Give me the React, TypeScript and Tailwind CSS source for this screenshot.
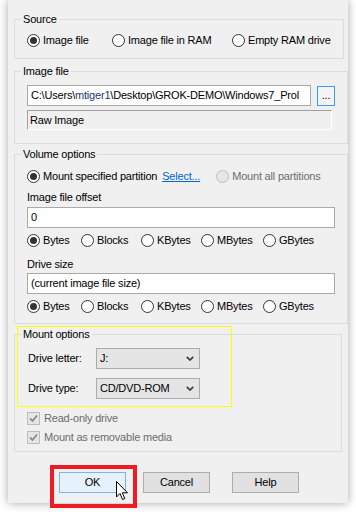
import React from "react";

function Radio({ checked = false, disabled = false, label }: { checked?: boolean; disabled?: boolean; label: string }) {
  return (
    <div className="flex items-center h-[14px]">
      <div
        className={
          "w-[13px] h-[13px] rounded-full border flex items-center justify-center shrink-0 " +
          (disabled ? "border-[#bcbcbc] bg-[#e6e6e6]" : "border-[#333333] bg-white")
        }
      >
        {checked && <div className="w-[7px] h-[7px] rounded-full bg-[#333333]" />}
      </div>
      <span className={"ml-[3px] whitespace-nowrap " + (disabled ? "text-[#6d6d6d]" : "text-black")}>{label}</span>
    </div>
  );
}

function Check({ label }: { label: string }) {
  return (
    <div className="flex items-center h-[14px]">
      <div className="w-[13px] h-[13px] border border-[#bcbcbc] bg-[#e6e6e6] flex items-center justify-center shrink-0">
        <svg width="9" height="9" viewBox="0 0 9 9">
          <path d="M1 4.5 L3.5 7 L8 1.5" fill="none" stroke="#8a8a8a" strokeWidth="1.8" />
        </svg>
      </div>
      <span className="ml-[4px] whitespace-nowrap text-[#6d6d6d]">{label}</span>
    </div>
  );
}

function Combo({ value }: { value: string }) {
  return (
    <div className="w-[104px] h-[21px] border border-[#acacac] bg-[#e5e5e5] flex items-center pl-[3px] pr-[5px]">
      <span className="flex-1">{value}</span>
      <svg width="8" height="5" viewBox="0 0 8 5">
        <path d="M0.8 0.8 L4 4 L7.2 0.8" fill="none" stroke="#3c3c3c" strokeWidth="1.7" />
      </svg>
    </div>
  );
}

function Btn({ label, primary = false }: { label: string; primary?: boolean }) {
  return (
    <div
      className={
        "w-[67px] h-[21px] border flex items-center justify-center " +
        (primary ? "bg-[#e5f1fb] border-[#7eb4ea]" : "bg-[#e1e1e1] border-[#adadad]")
      }
    >
      {label}
    </div>
  );
}

const fs = "border border-[#dcdcdc] px-[12px] m-0";
const lg = "-ml-[6px] px-[2px] leading-[14px] h-[14px]";

export default function App() {
  return (
    <div className="w-[356px] h-[512px] bg-white overflow-hidden relative font-['Liberation_Sans',Arial,sans-serif] text-[11px] tracking-[-0.2px] text-black">
      <div className="ml-[8px] w-[340px] h-[503px] bg-[#f0f0f0] shadow-[0_0_9px_rgba(0,0,0,0.35)] px-[6px] pt-[12px] flex flex-col">
        {/* Source */}
        <fieldset className={fs + " h-[47px]"}>
          <legend className={lg}>Source</legend>
          <div className="flex mt-[7px]">
            <div className="w-[85px]">
              <Radio checked label="Image file" />
            </div>
            <div className="w-[120px]">
              <Radio label="Image file in RAM" />
            </div>
            <Radio label="Empty RAM drive" />
          </div>
        </fieldset>

        {/* Image file */}
        <fieldset className={fs + " h-[80px] mt-[5px]"}>
          <legend className={lg}>Image file</legend>
          <div className="flex items-start mt-[7px]">
            <div className="w-[284px] h-[21px] border border-[#a9a9a9] bg-white flex items-center pl-[3px] overflow-hidden whitespace-nowrap">
              C:\Users\<span className="text-[#23346e] bg-white">mtiger1</span>\Desktop\GROK-DEMO\Windows7_Prol
            </div>
            <div className="ml-[6px] mt-[1px] w-[18px] h-[20px] border border-[#3c9cf0] bg-[#f4f4f4] flex items-end justify-center pb-[4px] leading-none">
              ...
            </div>
          </div>
          <div className="mt-[4px] w-[305px] h-[20px] border-t border-l border-[#a0a0a0] border-b border-r border-b-white border-r-white flex items-center pl-[2px]">
            Raw Image
          </div>
        </fieldset>

        {/* Volume options */}
        <fieldset className={fs + " h-[177px] mt-[3px]"}>
          <legend className={lg}>Volume options</legend>
          <div className="flex items-center mt-[8px] h-[14px]">
            <Radio checked label="Mount specified partition" />
            <span className="ml-[5px] text-[#0066cc] underline">Select...</span>
            <div className="ml-[16px]">
              <Radio disabled label="Mount all partitions" />
            </div>
          </div>
          <div className="mt-[7px] h-[14px] leading-[14px]">Image file offset</div>
          <div className="mt-[3px] w-[308px] h-[21px] border border-[#a9a9a9] bg-white flex items-center pl-[3px]">0</div>
          <div className="flex mt-[5px]">
            <div className="w-[54px]"><Radio checked label="Bytes" /></div>
            <div className="w-[60px]"><Radio label="Blocks" /></div>
            <div className="w-[60px]"><Radio label="KBytes" /></div>
            <div className="w-[62px]"><Radio label="MBytes" /></div>
            <Radio label="GBytes" />
          </div>
          <div className="mt-[10px] h-[14px] leading-[14px]">Drive size</div>
          <div className="mt-[2px] w-[308px] h-[21px] border border-[#a9a9a9] bg-white flex items-center pl-[3px]">
            (current image file size)
          </div>
          <div className="flex mt-[5px]">
            <div className="w-[54px]"><Radio checked label="Bytes" /></div>
            <div className="w-[60px]"><Radio label="Blocks" /></div>
            <div className="w-[60px]"><Radio label="KBytes" /></div>
            <div className="w-[62px]"><Radio label="MBytes" /></div>
            <Radio label="GBytes" />
          </div>
        </fieldset>

        {/* Mount options */}
        <fieldset className={fs + " h-[125px] mt-[3px]"}>
          <legend className={lg}>Mount options</legend>
          <div className="flex items-center mt-[7px]">
            <div className="w-[69px] pl-[1px]">Drive letter:</div>
            <Combo value="J:" />
          </div>
          <div className="flex items-center mt-[9px]">
            <div className="w-[69px] pl-[1px]">Drive type:</div>
            <Combo value="CD/DVD-ROM" />
          </div>
          <div className="mt-[12px]">
            <Check label="Read-only drive" />
          </div>
          <div className="mt-[5px]">
            <Check label="Mount as removable media" />
          </div>
        </fieldset>

        {/* Buttons */}
        <div className="flex mt-[20px] ml-[45px]">
          <Btn primary label="OK" />
          <div className="ml-[17px]"><Btn label="Cancel" /></div>
          <div className="ml-[22px]"><Btn label="Help" /></div>
        </div>
      </div>

      {/* annotation overlays */}
      <div className="absolute left-[17px] top-[326px] w-[215px] h-[81px] border border-[#ffff00] pointer-events-none" />
      <div className="absolute left-[50px] top-[465px] w-[87px] h-[43px] border-[4px] border-[#ed1c24] pointer-events-none" />
      <svg className="absolute left-[116px] top-[481px]" width="13" height="20" viewBox="0 0 13 20">
        <path
          d="M0.5 0.5 L0.5 16 L4 12.5 L6.5 18.5 L8.8 17.5 L6.3 11.8 L11.5 11.8 Z"
          fill="white"
          stroke="black"
          strokeWidth="1"
          strokeLinejoin="miter"
        />
      </svg>
    </div>
  );
}
